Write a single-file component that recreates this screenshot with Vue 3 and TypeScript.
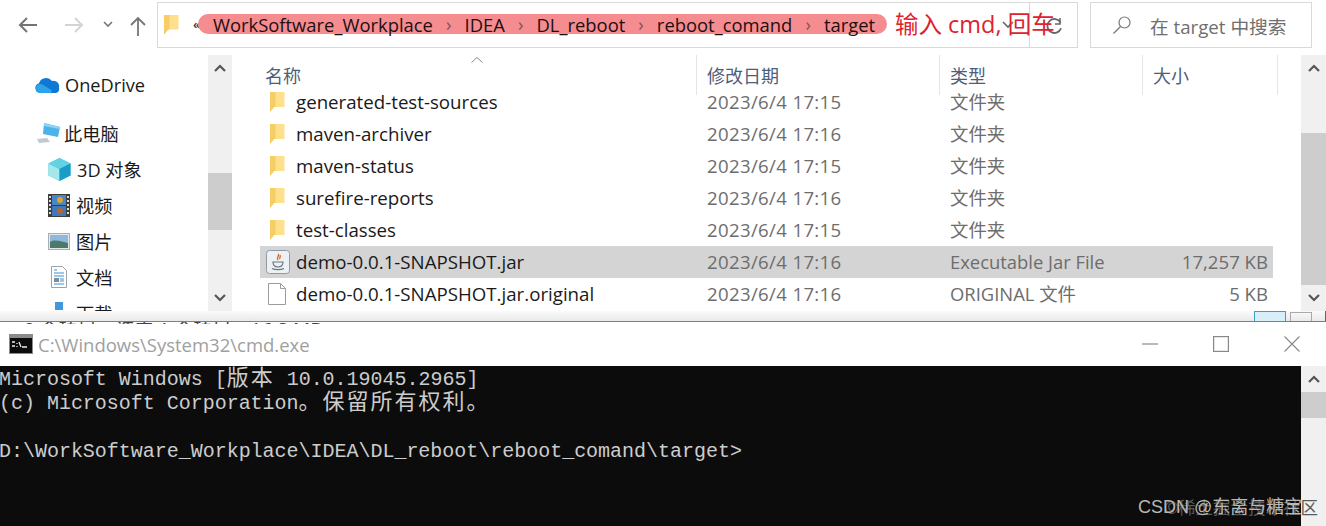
<script setup lang="ts">
const crumbs: string[] = ['WorkSoftware_Workplace', 'IDEA', 'DL_reboot', 'reboot_comand', 'target']

interface FileRow { name: string; date: string; type: string; size: string; icon: 'folder' | 'jar' | 'file'; selected?: boolean }
const rows: FileRow[] = [
  { name: 'generated-test-sources', date: '2023/6/4 17:15', type: '文件夹', size: '', icon: 'folder' },
  { name: 'maven-archiver', date: '2023/6/4 17:16', type: '文件夹', size: '', icon: 'folder' },
  { name: 'maven-status', date: '2023/6/4 17:15', type: '文件夹', size: '', icon: 'folder' },
  { name: 'surefire-reports', date: '2023/6/4 17:16', type: '文件夹', size: '', icon: 'folder' },
  { name: 'test-classes', date: '2023/6/4 17:15', type: '文件夹', size: '', icon: 'folder' },
  { name: 'demo-0.0.1-SNAPSHOT.jar', date: '2023/6/4 17:16', type: 'Executable Jar File', size: '17,257 KB', icon: 'jar', selected: true },
  { name: 'demo-0.0.1-SNAPSHOT.jar.original', date: '2023/6/4 17:16', type: 'ORIGINAL 文件', size: '5 KB', icon: 'file' },
]
const columns: string[] = ['名称', '修改日期', '类型', '大小']
const consoleLines: string[] = [
  'Microsoft Windows [版本 10.0.19045.2965]',
  '(c) Microsoft Corporation。保留所有权利。',
  '',
  'D:\\WorkSoftware_Workplace\\IDEA\\DL_reboot\\reboot_comand\\target>',
]
// Console cells: CJK glyphs take exactly two character cells.
const segments = (line: string): { text: string; wide: boolean }[] =>
  line.split(/([\u3000-\u9fff]+)/).filter(Boolean).map((text) => ({ text, wide: /[\u3000-\u9fff]/.test(text) }))
</script>

<template>
  <div class="page">
    <section class="explorer">
      <header class="toolbar">
        <svg class="nav-ico back" width="22" height="18" viewBox="0 0 22 18"><path d="M20 9H3M10 2 3 9l7 7" fill="none" stroke="#757575" stroke-width="2"/></svg>
        <svg class="nav-ico fwd" width="22" height="18" viewBox="0 0 22 18"><path d="M2 9h17M12 2l7 7-7 7" fill="none" stroke="#d4d4d4" stroke-width="2"/></svg>
        <svg class="nav-ico down" width="10" height="8" viewBox="0 0 10 8"><path d="M1 2l4 4 4-4" fill="none" stroke="#777" stroke-width="1.6"/></svg>
        <svg class="nav-ico up" width="16" height="20" viewBox="0 0 16 20"><path d="M8 20V2M1 9l7-7 7 7" fill="none" stroke="#757575" stroke-width="1.8"/></svg>

        <div class="address">
          <svg class="addr-folder" width="15" height="21" viewBox="0 0 15 21"><path d="M0 1h14.500v14.500H4L3 17 0 20.500z" fill="#fddf8c"/><path d="M0 1h5.500v14.500H4L3 17 0 20.500z" fill="#f7cd68"/></svg>
          <span class="chev">«</span>
          <div class="pill">
            <template v-for="(c, i) in crumbs" :key="c">
              <span>{{ c }}</span>
              <span v-if="i < crumbs.length - 1" class="sep">›</span>
            </template>
          </div>
          <div class="addr-end">
            <svg class="drop" width="12" height="8" viewBox="0 0 12 8"><path d="M1 1l5 5 5-5" fill="none" stroke="#666" stroke-width="1.600"/></svg>
            <span class="addr-div"></span>
            <svg class="refresh" width="18" height="18" viewBox="0 0 18 18"><path d="M14.500 3.500A7 7 0 1 1 9 2" fill="none" stroke="#666" stroke-width="1.800" transform="rotate(70 9 9)"/><path d="M13 1v6h-5" fill="none" stroke="#666" stroke-width="1.500" transform="translate(2 1)"/></svg>
          </div>
          <span class="note">输入 cmd, 回车</span>
        </div>

        <div class="search">
          <svg width="20" height="20" viewBox="0 0 20 20"><circle cx="12.500" cy="7.500" r="5.500" fill="none" stroke="#777" stroke-width="1.200"/><path d="M8.500 11.500 1.500 18.500" stroke="#777" stroke-width="1.300"/></svg>
          <span>在 target 中搜索</span>
        </div>
      </header>

      <div class="body">
        <nav class="tree">
          <div class="tree-list">
            <div class="tree-item lvl1 first">
              <svg width="25" height="17" viewBox="0 0 25 17"><path d="M5 16a5 5 0 0 1-1-9.800A7.500 7.500 0 0 1 17 4a5.500 5.500 0 0 1 7 6.500c1 3-1 5.500-3 5.500z" fill="#0f78d4"/><path d="M1 9.500c2-3 5-3 8-1l8 5-1 2.500H5a5 5 0 0 1-4-6.500z" fill="#2ea4e8"/></svg>
              <span>OneDrive</span>
            </div>
            <div class="tree-item lvl1 pc">
              <svg width="25" height="22" viewBox="0 0 25 22"><path d="M8 1l16 4-2 10-15-3z" fill="#4db2ea"/><path d="M8 1l16 4-1 2-15-3z" fill="#8cd2f6"/><path d="M1 17l10-1 3 4-11 1z" fill="#c2c9cf"/></svg>
              <span>此电脑</span>
            </div>
            <div class="tree-item lvl2">
              <svg width="23" height="23" viewBox="0 0 23 23"><path d="M11.500 0 22.500 5.500v12L11.500 23 .5 17.500v-12z" fill="#34bdd8"/><path d="M.5 5.500l11 5.500V23L.5 17.500z" fill="#a5e8ea"/><path d="M11.500 0 22.500 5.500 11.500 11 .5 5.500z" fill="#63d3e4"/><path d="M11.500 11 22.500 5.500v12L11.500 23z" fill="#1a9cc8"/></svg>
              <span>3D 对象</span>
            </div>
            <div class="tree-item lvl2">
              <svg width="22" height="23" viewBox="0 0 22 23"><rect width="22" height="23" fill="#3c3c3c"/><rect x="4" y="1" width="14" height="10" fill="#4d86c4"/><rect x="4" y="12" width="14" height="10" fill="#3f79b8"/><circle cx="12" cy="6" r="3" fill="#d9a72f"/><circle cx="12" cy="17" r="3" fill="#b9652f"/><path d="M1 3h2M1 7h2M1 11h2M1 15h2M1 19h2M19 3h2M19 7h2M19 11h2M19 15h2M19 19h2" stroke="#ddd" stroke-width="2"/></svg>
              <span>视频</span>
            </div>
            <div class="tree-item lvl2">
              <svg width="22" height="17" viewBox="0 0 22 17"><rect x=".5" y=".5" width="21" height="16" fill="#e4e8ec" stroke="#a8aeb4"/><rect x="2" y="2" width="18" height="13" fill="#8fb8dc"/><path d="M2 9c5-3 9-1 18 1v5H2z" fill="#4c7a68"/></svg>
              <span>图片</span>
            </div>
            <div class="tree-item lvl2">
              <svg width="22" height="22" viewBox="0 0 22 22"><path d="M3.500.5h11l4 4v17h-15z" fill="#fff" stroke="#9aa4ad"/><path d="M6 4h3M6 7h10M6 10h10M12 13h4M12 15h4M6 18h10" stroke="#3f8ed0" stroke-width="1.200"/><rect x="6" y="12" width="5" height="4" fill="#7c8c96"/></svg>
              <span>文档</span>
            </div>
            <div class="tree-item lvl2">
              <svg width="22" height="22" viewBox="0 0 22 22"><rect x="7" y="0" width="8" height="8" fill="#3f97de"/></svg>
              <span>下载</span>
            </div>
          </div>
          <div class="vbar small">
            <svg class="arr" width="12" height="8" viewBox="0 0 12 8"><path d="M1 7l5-5 5 5" fill="none" stroke="#555" stroke-width="2.200"/></svg>
            <div class="track"><div class="thumb t1"></div></div>
            <svg class="arr" width="12" height="8" viewBox="0 0 12 8"><path d="M1 1l5 5 5-5" fill="none" stroke="#555" stroke-width="2.200"/></svg>
          </div>
        </nav>

        <main class="files">
          <div class="head">
            <span class="sort-caret"><svg width="12" height="6" viewBox="0 0 12 6"><path d="M.5 5.500 6 .5l5.500 5" fill="none" stroke="#888"/></svg></span>
            <div v-for="c in columns" :key="c" class="cell">{{ c }}</div>
            <div class="cell"></div>
          </div>
          <div class="list">
            <div v-for="r in rows" :key="r.name" class="row" :class="{ selected: r.selected }">
              <div class="name">
                <svg v-if="r.icon === 'folder'" class="ico-folder" width="15" height="20" viewBox="0 0 15 20"><path d="M0 0h14.500v15H4L3 16.500 0 20z" fill="#fddf8c"/><path d="M0 0h5.500v15H4L3 16.500 0 20z" fill="#f7cd68"/></svg>
                <svg v-else-if="r.icon === 'jar'" class="ico-jar" width="24" height="24" viewBox="0 0 24 24"><rect x=".5" y=".5" width="23" height="23" rx="3" fill="#eef1f4" stroke="#8e9aa6"/><path d="M12 4c2 2-2 3 0 6M14 5c1 2-1 3 0 4" fill="none" stroke="#d8651c" stroke-width="1.300"/><path d="M7 12h10c0 4-2 5-5 5s-5-1-5-5zM6 18.500c3 1.500 9 1.500 12 0" fill="none" stroke="#667684" stroke-width="1.200"/></svg>
                <svg v-else class="ico-file" width="18" height="22" viewBox="0 0 18 22"><path d="M.5.500h12l5 5v16H.5z" fill="#fff" stroke="#9c9c9c"/><path d="M12.500.5v5h5" fill="none" stroke="#9c9c9c"/></svg>
                <span class="fname">{{ r.name }}</span>
              </div>
              <div class="sub date">{{ r.date }}</div>
              <div class="sub type">{{ r.type }}</div>
              <div class="sub size">{{ r.size }}</div>
            </div>
          </div>
        </main>

        <div class="vbar big">
          <svg class="arr" width="12" height="8" viewBox="0 0 12 8"><path d="M1 7l5-5 5 5" fill="none" stroke="#555" stroke-width="2.200"/></svg>
          <div class="track"><div class="thumb t2"></div></div>
          <svg class="arr" width="12" height="8" viewBox="0 0 12 8"><path d="M1 1l5 5 5-5" fill="none" stroke="#555" stroke-width="2.200"/></svg>
        </div>
      </div>

      <div class="status">
        <div class="views">
          <span class="view active"></span>
          <span class="view"></span>
        </div>
      </div>
    </section>

    <section class="cmd">
      <header class="cmd-title">
        <div class="peek"><span>9 个项目　选中 1 个项目　16.8 MB</span></div>
        <svg class="cmd-ico" width="24" height="20" viewBox="0 0 24 20"><rect width="24" height="20" fill="#8b8b8b"/><rect x="1" y="4" width="22" height="15" fill="#0c0c0c"/><path d="M3 8h3M3 12h3M8 9v1M8 12v1M10 8l2 5M13 13h5" stroke="#eee" stroke-width="1.300" fill="none"/></svg>
        <span class="cmd-name">C:\Windows\System32\cmd.exe</span>
        <div class="win-btns">
          <svg width="16" height="16" viewBox="0 0 16 16"><path d="M0 8h16" stroke="#888" stroke-width="1.200"/></svg>
          <svg width="16" height="16" viewBox="0 0 16 16"><rect x=".6" y=".6" width="14.800" height="14.800" fill="none" stroke="#888" stroke-width="1.200"/></svg>
          <svg width="16" height="16" viewBox="0 0 16 16"><path d="M.5.500l15 15M15.500.5l-15 15" stroke="#888" stroke-width="1.100"/></svg>
        </div>
      </header>
      <div class="console">
        <div class="output">
          <div v-for="(l, i) in consoleLines" :key="i" class="line"><span v-for="(s, j) in segments(l)" :key="j" :class="{ wide: s.wide }">{{ s.text }}</span></div>
        </div>
        <div class="vbar con">
          <svg class="arr" width="12" height="8" viewBox="0 0 12 8"><path d="M1 7l5-5 5 5" fill="none" stroke="#555" stroke-width="2.200"/></svg>
          <div class="track"><div class="thumb t3"></div></div>
        </div>
        <span class="ghost">©稀土掘金技术社区</span>
        <span class="mark">CSDN @东离与糖宝</span>
      </div>
    </section>
  </div>
</template>

<style>
html, body { margin: 0; background: #fff; overflow: hidden; }
</style>

<style scoped>
.page {
  width: 1326px;
  height: 526px;
  display: flex;
  flex-direction: column;
  overflow: hidden;
  font-family: "Open Sans", "Noto Sans CJK SC", sans-serif;
  color: #1a1a1a;
}
.explorer { height: 322px; flex: none; display: flex; flex-direction: column; overflow: hidden; }

.toolbar { height: 55px; flex: none; display: flex; align-items: flex-start; position: relative; }
.nav-ico { flex: none; margin-top: 16px; }
.back { margin-left: 17px; }
.fwd { margin-left: 24px; }
.down { margin-left: 18px; margin-top: 20px; }
.up { margin-left: 17px; margin-top: 16px; margin-right: 11px; }
.address {
  position: relative;
  margin-top: 2px;
  width: 921px;
  height: 46px;
  box-sizing: border-box;
  border: 1px solid #d9d9d9;
  display: flex;
  align-items: center;
  flex: none;
}
.addr-folder { margin-left: 6px; margin-top: -2px; flex: none; }
.chev { margin-left: 14px; margin-top: -2px; font-size: 13px; color: #333; font-weight: 600; width: 9px; flex: none; }
.pill {
  margin-left: -4px;
  margin-top: -2px;
  height: 20px;
  width: 689px;
  border-radius: 10px;
  background: #f58c90;
  display: flex;
  align-items: center;
  padding-left: 15px;
  box-sizing: border-box;
  font-size: 18.400px;
  color: #1d0f10;
  white-space: nowrap;
  flex: none;
}
.sep { margin: 0 13.100px; color: #7a5558; font-size: 18px; }
.addr-end { margin-left: auto; display: flex; align-items: center; height: 100%; }
.drop { margin-right: 15px; }
.addr-div { width: 1px; height: 100%; background: #d9d9d9; }
.refresh { margin: 0 14px 0 15px; }
.note {
  position: absolute;
  left: 737px;
  top: 3px;
  font-size: 23.500px;
  color: #dd2230;
  white-space: nowrap;
}
.search {
  margin: 2px 0 0 12px;
  width: 222px;
  height: 46px;
  box-sizing: border-box;
  border: 1px solid #d9d9d9;
  display: flex;
  align-items: center;
  padding-left: 21px;
  gap: 18px;
  font-size: 18.700px;
  color: #6f6f6f;
  white-space: nowrap;
}

.body { flex: 1; min-height: 0; display: flex; }
.tree { width: 235px; flex: none; display: flex; }
.tree-list { width: 208px; flex: none; overflow: hidden; }
.tree-item { display: flex; align-items: center; height: 36px; font-size: 18.200px; white-space: nowrap; }
.tree-item.first { margin-top: 12px; }
.tree-item.pc { margin-top: 12px; }
.lvl1 { padding-left: 35px; gap: 5px; }
.lvl1.pc { padding-left: 36px; gap: 3px; }
.lvl2 { padding-left: 48px; gap: 6px; }

.vbar { display: flex; flex-direction: column; align-items: center; background: #f0f0f0; flex: none; box-sizing: border-box; }
.vbar .arr { flex: none; margin: 9px 0; }
.vbar .track { flex: 1; width: 100%; }
.thumb { width: 100%; background: #cdcdcd; }
.vbar.small { width: 24px; height: 256px; }
.t1 { height: 57px; margin-top: 92px; }
.vbar.big { width: 25px; height: 256px; margin-left: auto; }
.t2 { height: 152px; margin-top: 52px; }
.vbar.con { width: 25px; height: 160px; }
.t3 { height: 26px; }

.files { width: 1066px; flex: none; display: flex; flex-direction: column; overflow: hidden; }
.head {
  position: relative;
  display: grid;
  grid-template-columns: 462px 243px 203px 135px 1fr;
  height: 31px;
  flex: none;
  font-size: 18px;
  color: #4c607a;
}
.cell { position: relative; padding: 8px 0 0 30px; box-sizing: border-box; white-space: nowrap; line-height: 26px; z-index: 1; }
.cell:nth-of-type(n+2) { padding-left: 10px; }
.cell:not(:last-child)::after {
  content: "";
  position: absolute;
  right: 0;
  top: 0;
  width: 1px;
  height: 40px;
  background: #e5e5e5;
}
.sort-caret { position: absolute; left: 236px; top: 1px; line-height: 0; }
.list { padding-left: 25px; width: 1038px; box-sizing: border-box; }
.row {
  display: grid;
  grid-template-columns: 437px 243px 203px 130px;
  width: 1013px;
  height: 32px;
  align-items: center;
  font-size: 18.700px;
  white-space: nowrap;
}
.row.selected { background: #d4d4d4; }
.name { display: flex; align-items: center; gap: 12px; padding-left: 10px; }
.fname { margin-top: -2px; }
.ico-folder { margin-right: -1px; }
.ico-jar { margin-left: -4px; margin-right: -6px; }
.ico-file { margin-left: -2px; margin-right: -2px; }
.sub { color: #6d6d6d; padding-left: 10px; margin-top: -2px; font-size: 18.400px; }
.date { font-size: 18.600px; letter-spacing: .35px; }
.size { font-size: 18.600px; text-align: right; padding-right: 5px; }

.status { height: 10px; flex: none; position: relative; display: flex; background: linear-gradient(#fbfbfb, #e9e9e9); border-bottom: 1px solid #7f7f7f; border-right: 1px solid #3b6f9a; overflow: hidden; }
.views { margin-left: auto; margin-right: 13px; display: flex; gap: 4px; height: 100%; }
.view { width: 22px; border: 1px solid #a9a9a9; border-bottom: 0; box-sizing: border-box; margin-top: 1px; }
.view.active { width: 32px; margin-top: 0; border: 1px solid #3f9fc0; border-bottom: 0; background: #d8eef8; }

.cmd { flex: 1; min-height: 0; display: flex; flex-direction: column; }
.cmd-title { height: 44px; flex: none; display: flex; align-items: center; background: #fff; position: relative; }
.peek { position: absolute; left: 24px; top: 0; height: 2px; overflow: hidden; font-size: 19px; line-height: 26px; color: #444; white-space: pre; }
.peek span { display: block; margin-top: -6px; }
.cmd-ico { margin-left: 9px; flex: none; }
.cmd-name { margin-left: 5px; font-size: 18.500px; color: #a0a0a0; white-space: nowrap; }
.win-btns { margin-left: auto; margin-right: 26px; display: flex; gap: 55px; }
.console { flex: 1; min-height: 0; position: relative; display: flex; justify-content: space-between; background: #0c0c0c; }
.output {
  padding-top: 2px;
  margin-left: -1px;
  font-family: "Liberation Mono", "Noto Sans CJK SC", monospace;
  font-size: 20px;
  line-height: 24px;
  color: #cccccc;
  letter-spacing: -.02px;
}
.line { height: 24px; white-space: pre; }
.wide { font-size: 22px; line-height: 0; letter-spacing: 2px; font-family: "Noto Sans CJK SC", sans-serif; }
.mark, .ghost { position: absolute; white-space: nowrap; line-height: 24px; font-family: "Liberation Sans", "Noto Sans CJK SC", sans-serif; }
.mark { left: 1138px; top: 129px; font-size: 18px; color: #b8b8b8; }
.ghost { left: 1165px; top: 130px; font-size: 17.500px; color: #5a5a5a; }
</style>
